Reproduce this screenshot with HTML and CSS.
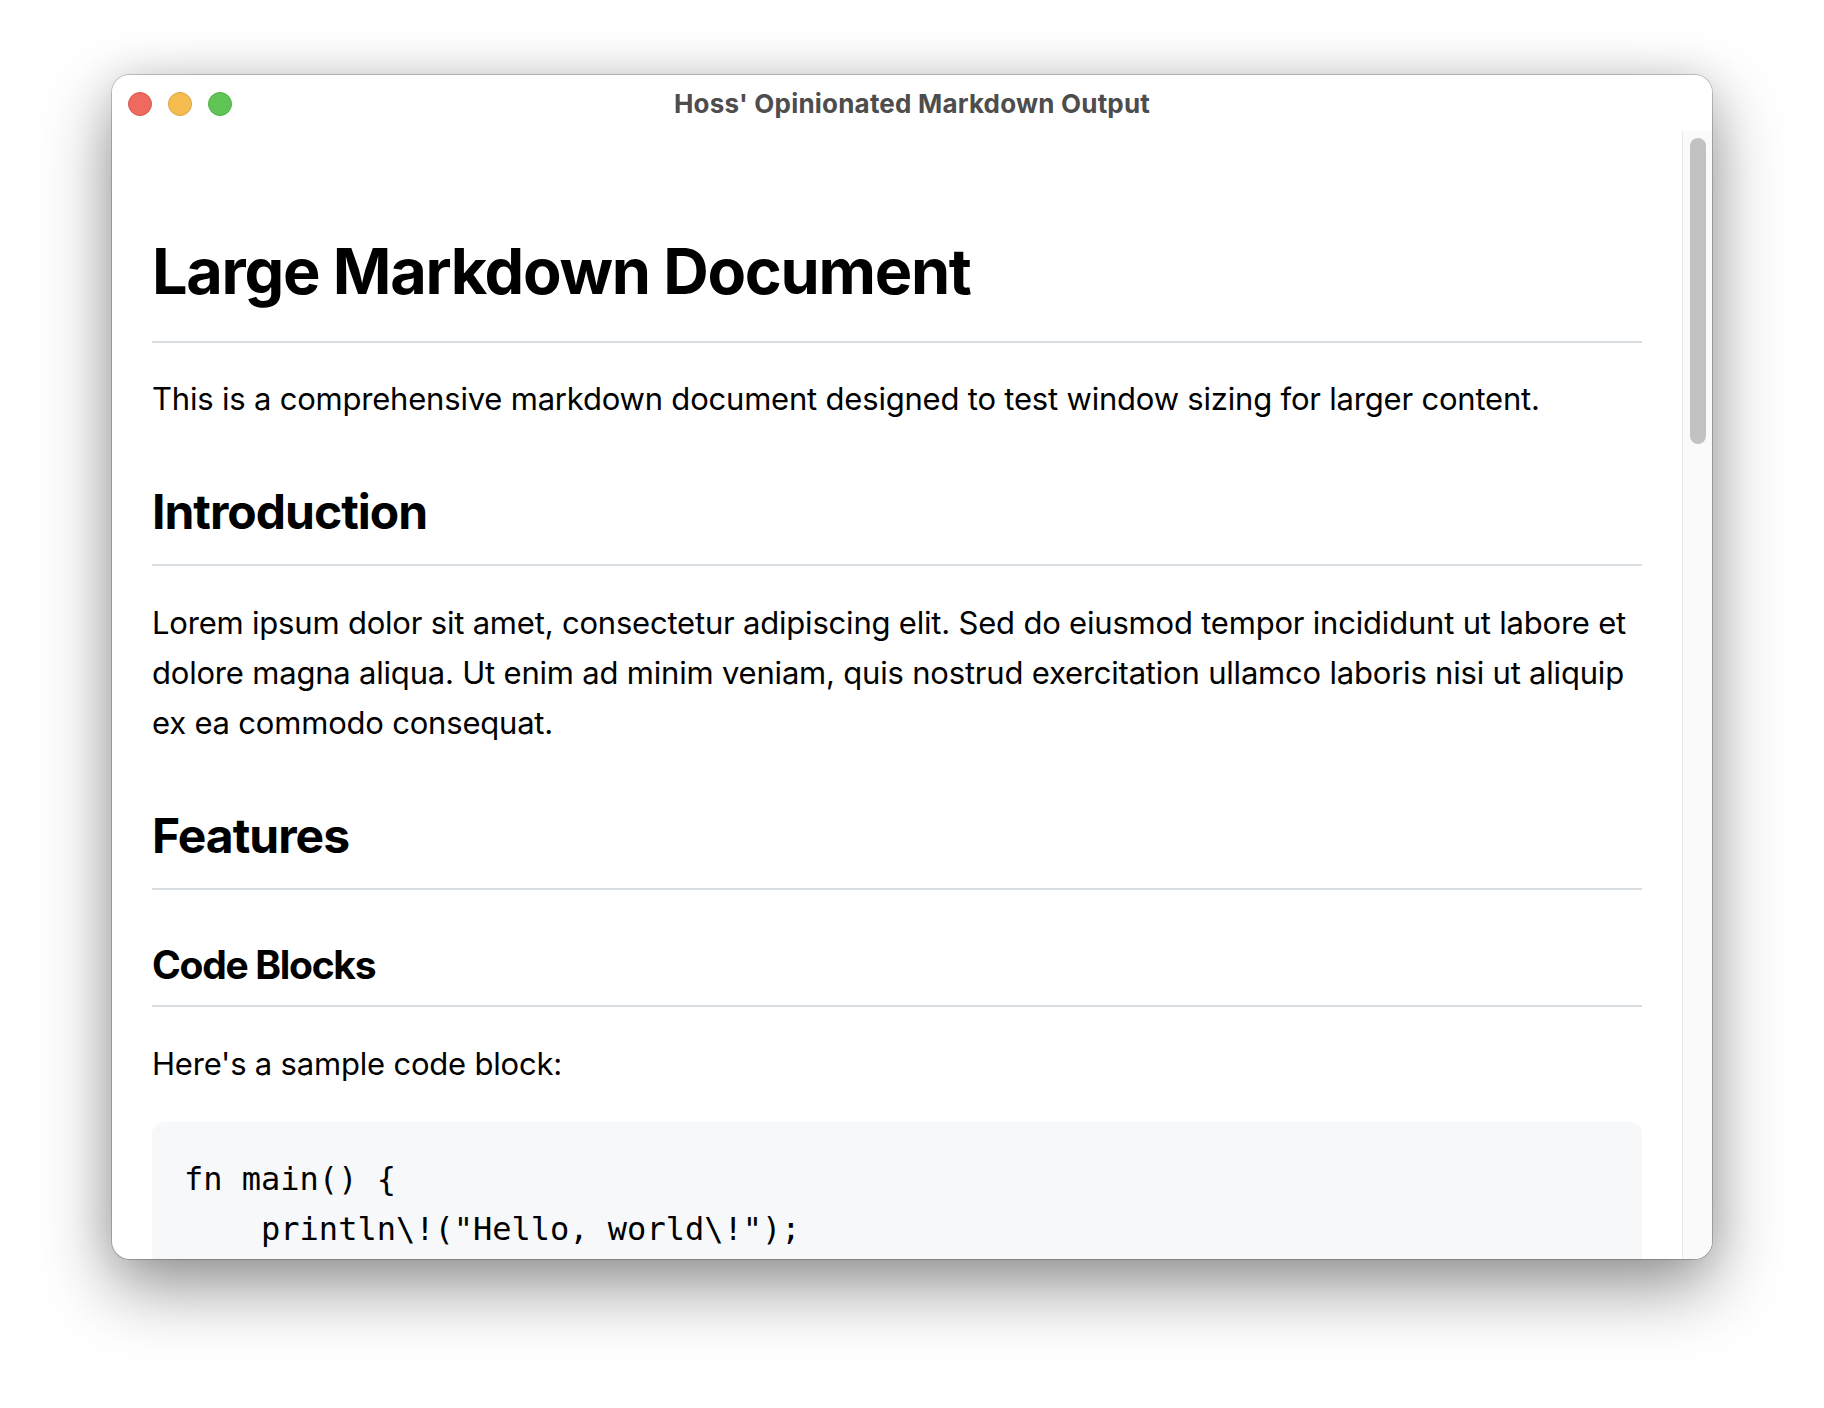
FILE: index.html
```html
<!DOCTYPE html>
<html lang="en">
<head>
<meta charset="utf-8">
<title>Hoss' Opinionated Markdown Output</title>
<link rel="stylesheet" href="styles.css">
</head>
<body>
<div class="stage">
  <div class="window">
    <div class="titlebar">
      <div class="lights">
        <span class="light red"></span>
        <span class="light yellow"></span>
        <span class="light green"></span>
      </div>
      <div class="title">Hoss' Opinionated Markdown Output</div>
      <div class="spacer"></div>
    </div>
    <div class="content">
      <div class="doc">
        <h1 class="h1">Large Markdown Document</h1>
        <p class="p p-first">This is a comprehensive markdown document designed to test window sizing for larger content.</p>
        <h2 class="h2 h2-intro">Introduction</h2>
        <p class="p p-lorem">Lorem ipsum dolor sit amet, consectetur adipiscing elit. Sed do eiusmod tempor incididunt ut labore et dolore magna aliqua. Ut enim ad minim veniam, quis nostrud exercitation ullamco laboris nisi ut aliquip ex ea commodo consequat.</p>
        <h2 class="h2 h2-features">Features</h2>
        <h3 class="h3">Code Blocks</h3>
        <p class="p p-here">Here's a sample code block:</p>
        <pre class="code">fn main() {
    println\!("Hello, world\!");
}</pre>
      </div>
      <div class="scrollbar"><div class="thumb"></div></div>
    </div>
  </div>
</div>
</body>
</html>
```
FILE: styles.css
```css
html, body {
  margin: 0;
  padding: 0;
  background: #ffffff;
}

.stage {
  width: 1824px;
  height: 1408px;
  box-sizing: border-box;
  padding: 75px 112px 149px 112px;
  display: flex;
}

.window {
  width: 1600px;
  height: 1184px;
  background: #ffffff;
  border-radius: 18px;
  overflow: hidden;
  display: flex;
  flex-direction: column;
  box-shadow: 0 0 0 1px rgba(0, 0, 0, 0.2),
              0 28px 70px rgba(0, 0, 0, 0.42),
              0 0 40px rgba(0, 0, 0, 0.10);
}

.titlebar {
  height: 56px;
  flex: none;
  display: grid;
  grid-template-columns: 1fr auto 1fr;
  align-items: center;
  background: #ffffff;
}

.lights {
  display: flex;
  gap: 16px;
  padding-left: 16px;
  padding-top: 2px;
}

.light {
  width: 24px;
  height: 24px;
  border-radius: 50%;
  box-sizing: border-box;
}

.red { background: #ee6a5f; border: 1px solid #d65a50; }
.yellow { background: #f5bd4f; border: 1px solid #d9a33e; }
.green { background: #61c555; border: 1px solid #4fad45; }

.title {
  font-family: Inter, "Noto Sans", sans-serif;
  font-weight: 700;
  font-size: 26px;
  letter-spacing: 0.2px;
  color: #4d4d4d;
  white-space: nowrap;
}

.content {
  flex: 1;
  display: flex;
  min-height: 0;
}

.doc {
  flex: 1;
  min-width: 0;
  padding: 100px 40px 0 40px;
  overflow: hidden;
  font-family: Inter, "Noto Sans", sans-serif;
  color: #000000;
}

.scrollbar {
  width: 30px;
  flex: none;
  box-sizing: border-box;
  background: #fafafa;
  border-left: 1px solid #e9e9e9;
  padding: 7px 0 0 7px;
}

.thumb {
  width: 16px;
  height: 306px;
  border-radius: 8px;
  background: #c2c2c2;
}

.h1 {
  margin: 0;
  font-size: 63px;
  line-height: 80px;
  font-weight: 700;
  letter-spacing: -1.3px;
  padding-bottom: 30px;
  border-bottom: 2px solid #d8dde2;
}

.h2 {
  margin: 0;
  font-size: 48px;
  line-height: 62px;
  font-weight: 700;
  letter-spacing: -1px;
  padding-bottom: 21px;
  border-bottom: 2px solid #d8dde2;
}

.h2-intro { margin-top: 57px; }
.h2-features { margin-top: 57px; }

.h3 {
  margin: 50px 0 0 0;
  font-size: 39px;
  line-height: 50px;
  font-weight: 700;
  letter-spacing: -1.3px;
  padding-bottom: 15px;
  border-bottom: 2px solid #d8dde2;
}

.p {
  margin: 29px 0 0 0;
  font-size: 31px;
  line-height: 50px;
  letter-spacing: -0.2px;
}

.p-first { margin-top: 31px; }
.p-lorem { margin-top: 32px; }
.p-here { margin-top: 32px; }

.code {
  margin: 33px 0 0 0;
  padding: 32px 32px 31px 32px;
  background: #f6f8fa;
  border-radius: 12px;
  font-family: "DejaVu Sans Mono", "Liberation Mono", monospace;
  font-size: 32px;
  line-height: 50px;
  color: #000000;
}
```
